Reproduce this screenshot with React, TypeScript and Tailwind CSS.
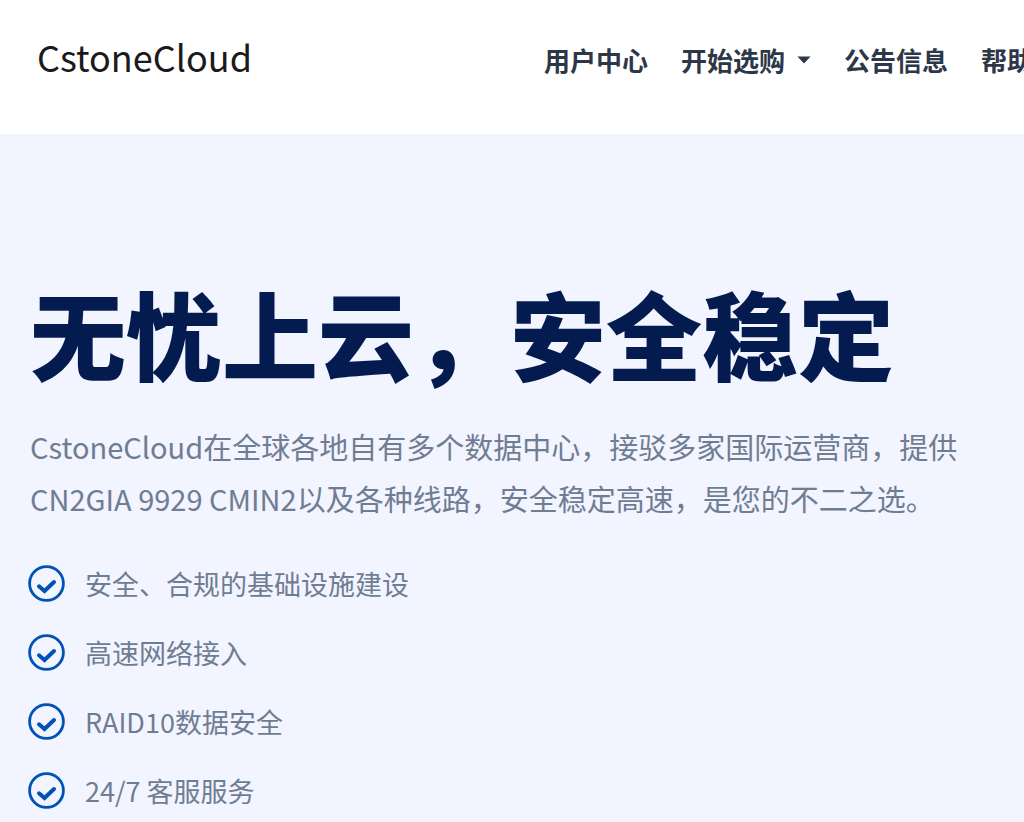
interface NavItem {
  label: string;
  href: string;
  hasMenu?: boolean;
}

const navItems: NavItem[] = [
  { label: '用户中心', href: '#user' },
  { label: '开始选购', href: '#shop', hasMenu: true },
  { label: '公告信息', href: '#news' },
  { label: '帮助', href: '#help' },
];

const features = ['安全、合规的基础设施建设', '高速网络接入', 'RAID10数据安全', '24/7 客服服务'];

function CheckIcon() {
  return (
    <svg viewBox="0 0 37 37" className="h-[37px] w-[37px] shrink-0" fill="none" stroke="#0052b4" aria-hidden="true">
      <circle cx="18.5" cy="18.5" r="16.9" strokeWidth="2.8" />
      <path d="M11 21.3 L16.5 26 L26 17" strokeWidth="4" strokeLinecap="round" strokeLinejoin="miter" />
    </svg>
  );
}

function Caret() {
  return (
    <svg viewBox="0 0 14 8" className="h-2 w-3.5" fill="currentColor" aria-hidden="true">
      <path d="M0.4 0.5 H13.6 L7 7.4 Z" />
    </svg>
  );
}

function Header() {
  return (
    <header className="flex items-start overflow-hidden bg-white px-[30px] pt-9 pb-[50px]">
      <div className="w-1/2 shrink-0 pl-[7px]">
        <a href="#home" className="block text-[36px] leading-[40px] text-[#1a1a1a]">
          CstoneCloud
        </a>
      </div>
      <nav className="flex shrink-0 gap-[33px] pl-8 text-[26px] leading-[48px] font-bold whitespace-nowrap text-[#2d3748]">
        {navItems.map((item) => (
          <a key={item.label} href={item.href} className="flex items-center gap-3">
            {item.label}
            {item.hasMenu && <Caret />}
          </a>
        ))}
      </nav>
    </header>
  );
}

export default function App() {
  return (
    <div className="min-h-screen bg-[#f2f4ff] font-['Noto_Sans_CJK_SC',sans-serif]">
      <Header />
      <main className="px-[30px] pt-[126px]">
        <h1 className="text-[96px] leading-[144px] font-black whitespace-nowrap text-[#031b4e]">无忧上云，安全稳定</h1>
        <p className="mt-4 text-[29px] leading-[52px] text-[#6f7d92]">
          CstoneCloud在全球各地自有多个数据中心，接驳多家国际运营商，提供CN2GIA 9929 CMIN2以及各种线路，安全稳定高速，是您的不二之选。
        </p>
        <ul className="mt-[25px] -ml-0.5">
          {features.map((feature) => (
            <li
              key={feature}
              className="flex items-center gap-5 py-3.5 text-[27px] leading-[41px] text-[#6f7d92] last:pb-0"
            >
              <CheckIcon />
              {feature}
            </li>
          ))}
        </ul>
      </main>
    </div>
  );
}
